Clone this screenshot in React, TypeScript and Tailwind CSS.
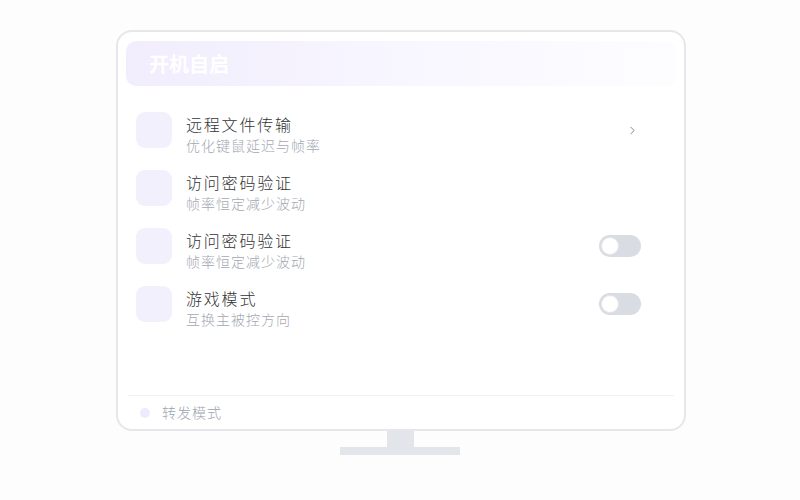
import { ChevronRight } from "lucide-react"

const rows = [
  { title: "远程文件传输", sub: "优化键鼠延迟与帧率", action: "chevron" },
  { title: "访问密码验证", sub: "帧率恒定减少波动", action: "none" },
  { title: "访问密码验证", sub: "帧率恒定减少波动", action: "toggle" },
  { title: "游戏模式", sub: "互换主被控方向", action: "toggle" },
]

function Toggle() {
  return (
    <div className="flex h-[22px] w-[42px] items-center rounded-full bg-[#d9dce2] px-[2px]">
      <div className="h-[18px] w-[18px] rounded-full border border-[#e5e7eb] bg-white" />
    </div>
  )
}

export default function App() {
  return (
    <div
      className="flex h-[500px] w-[800px] flex-col bg-[#fdfdfd]"
      style={{ fontFamily: '"Noto Sans CJK SC", "Noto Sans", sans-serif' }}
    >
      <div className="ml-[116px] mt-[30px] flex h-[401px] w-[570px] flex-col rounded-[16px] border-2 border-[#e5e7eb] bg-white px-[8px] pt-[9px]">
        <div className="flex h-[45px] items-center rounded-[10px] bg-gradient-to-r from-[#f1edfd] via-[#f8f6ff] to-[#fdfdff] px-[23px]">
          <span className="text-[20px] font-bold text-white">开机自启</span>
        </div>
        <div className="mt-[15px] flex flex-1 flex-col pl-[10px] pr-[35px]">
          {rows.map((r, i) => (
            <div key={i} className="flex h-[58px] items-center">
              <div className="h-[36px] w-[36px] rounded-[9px] bg-[#f3f0fe]" />
              <div className="ml-[14px] flex flex-1 flex-col pt-[8px] font-light">
                <span className="text-[16px] leading-[21px] tracking-[1.8px] text-[#333333]">{r.title}</span>
                <span className="text-[14px] leading-[20px] tracking-[1px] text-[#a3a8b1]">{r.sub}</span>
              </div>
              {r.action === "chevron" && (
                <ChevronRight size={13} strokeWidth={1.6} className="mr-[2px] text-[#6b7280]" />
              )}
              {r.action === "toggle" && <Toggle />}
            </div>
          ))}
        </div>
        <div className="mx-[2px] border-t border-[#eef0f3]" />
        <div className="flex h-[33px] items-center pl-[14px]">
          <div className="h-[10px] w-[10px] rounded-full bg-[#efeafd]" />
          <span className="ml-[12px] text-[14px] font-light tracking-[1px] text-[#9ca3af]">转发模式</span>
        </div>
      </div>
      <div className="ml-[387px] h-[16px] w-[27px] bg-[#e2e5e9]" />
      <div className="ml-[340px] h-[8px] w-[120px] bg-[#e2e5e9]" />
    </div>
  )
}
